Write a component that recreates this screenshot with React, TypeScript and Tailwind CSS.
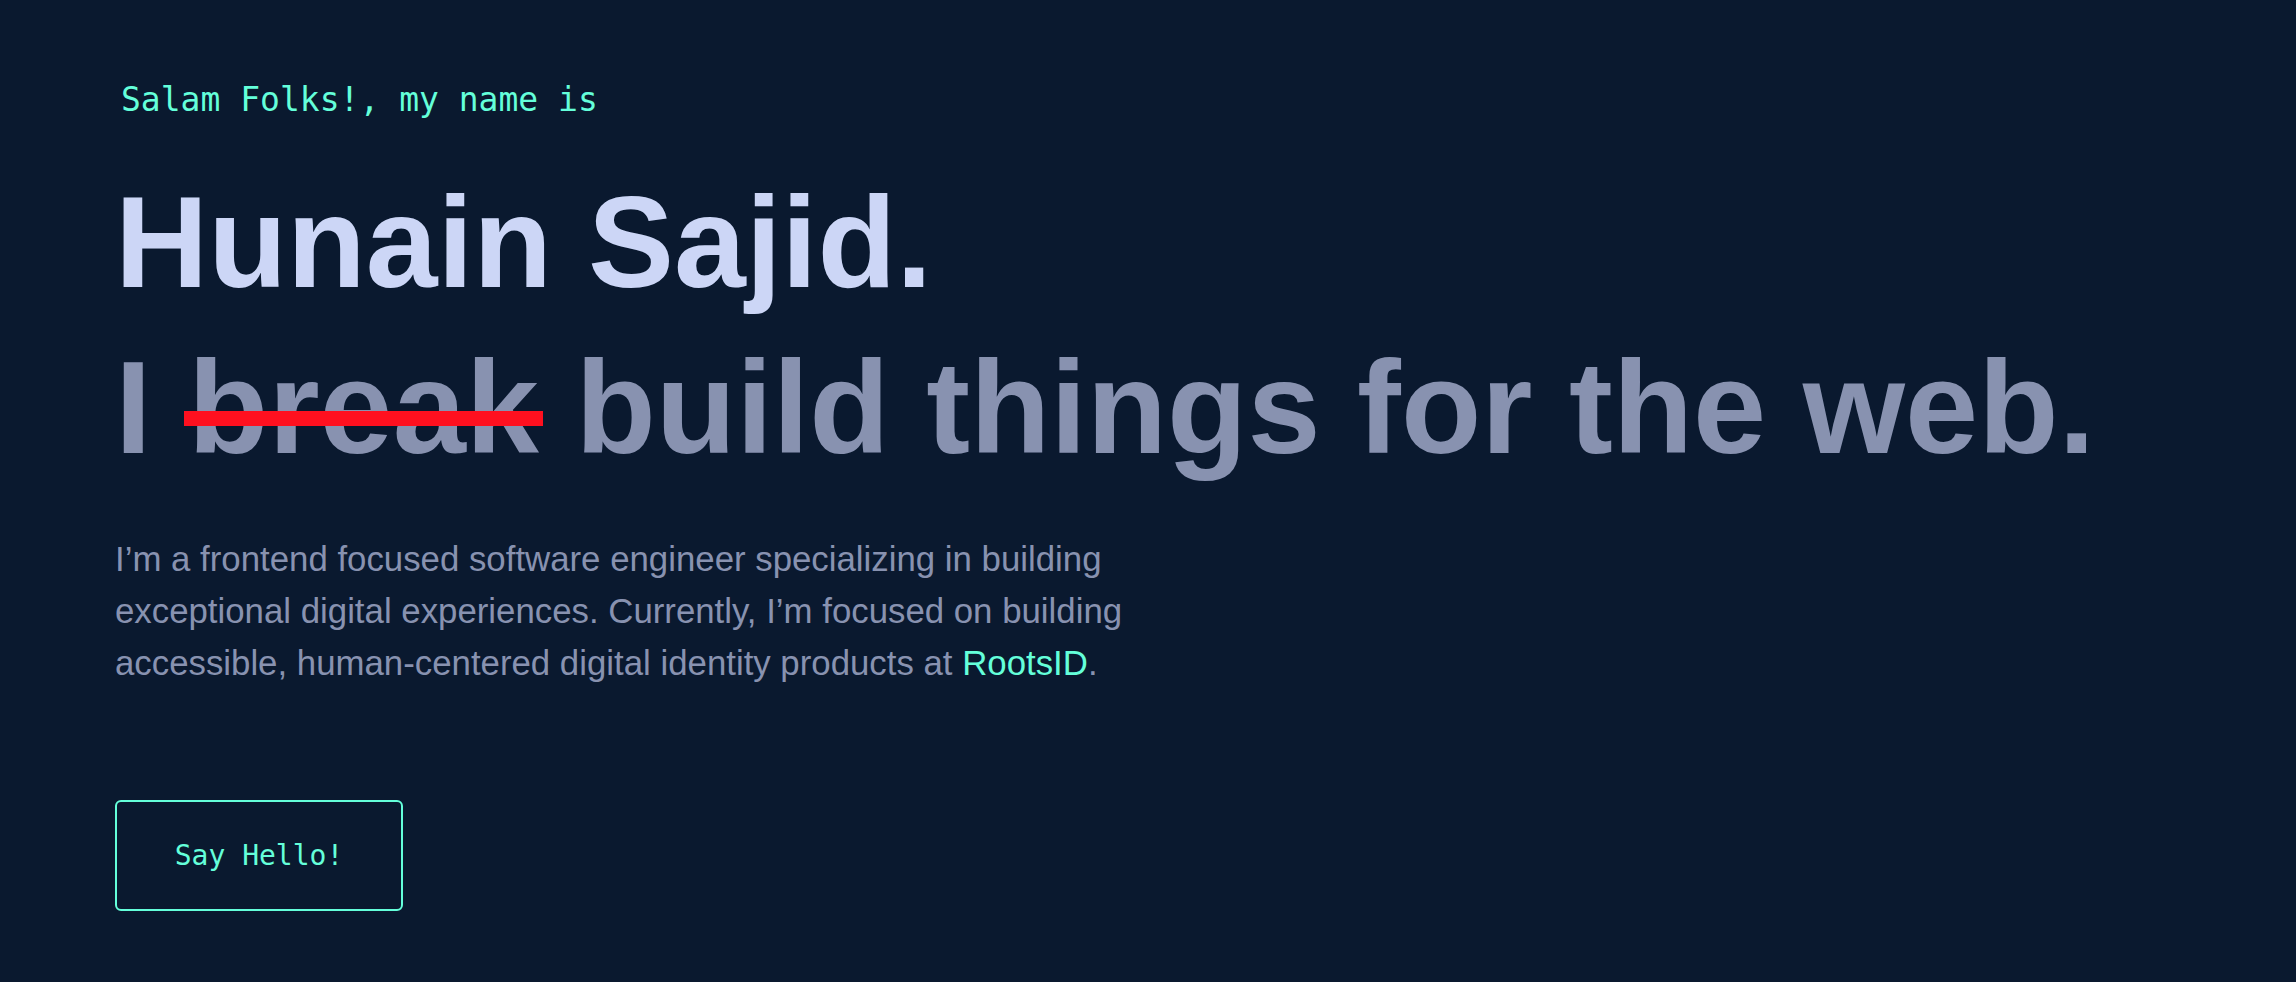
const mono = "font-['DejaVu_Sans_Mono','Liberation_Mono',monospace]";
const sans = "font-['Liberation_Sans',Arial,sans-serif]";

export default function App() {
  return (
    <div className="min-h-screen w-full bg-[#0a192f]">
      <section className="flex flex-col items-start pl-[115px] pt-[80px]">
        <h1 className={`${mono} ml-[6px] text-[33px] leading-[40px] text-[#64ffda]`}>
          Salam Folks!, my name is
        </h1>

        <h2 className={`${sans} mt-[40px] text-[129px] font-bold leading-[165px] text-[#ccd6f6]`}>
          Hunain Sajid.
        </h2>

        <h3 className={`${sans} text-[131.5px] font-bold leading-[165px] text-[#8892b0]`}>
          I{" "}
          <span className="relative inline-block">
            break
            <span className="absolute left-[-4px] right-[-4px] top-[86px] h-[15px] bg-[#ff101f]" />
          </span>{" "}
          build things for the web.
        </h3>

        <p className={`${sans} mt-[43px] text-[34.8px] leading-[52px] text-[#8892b0]`}>
          I’m a frontend focused software engineer specializing in building
          <br />
          exceptional digital experiences. Currently, I’m focused on building
          <br />
          accessible, human-centered digital identity products at{" "}
          <a href="#" className="text-[#64ffda]">
            RootsID
          </a>
          .
        </p>

        <a
          href="#"
          className={`${mono} mt-[111px] flex h-[111px] w-[288px] items-center justify-center rounded-[6px] border-2 border-[#64ffda] text-[28px] leading-[32px] text-[#64ffda]`}
        >
          Say Hello!
        </a>
      </section>
    </div>
  );
}
